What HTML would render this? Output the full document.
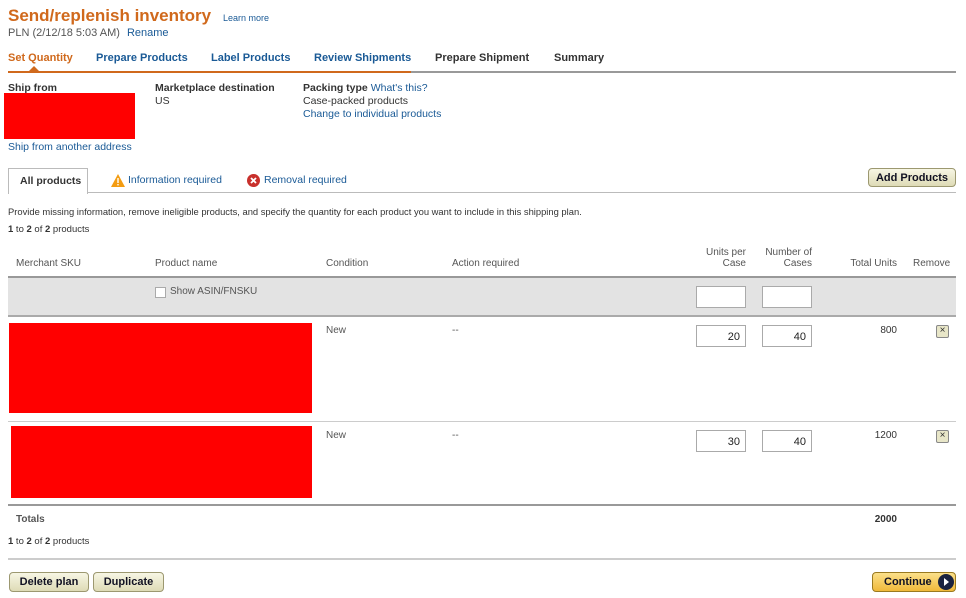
<!DOCTYPE html><html><head><style>
body{margin:0;width:966px;height:598px;position:relative;font-family:"Liberation Sans",Arial,sans-serif;background:#fff;color:#333;overflow:hidden}
.a{position:absolute;white-space:nowrap}
.s{font-size:10.5px}
.l{color:#1a5a96}
.b{font-weight:bold}
.tab{font-size:11px;font-weight:bold;color:#1a5a96}
.inp{position:absolute;width:50px;height:20px;border:1px solid #aaa;background:#fff;font-size:11px;text-align:right;box-sizing:border-box;padding:5px 5px 0 0;color:#222}
.btn{position:absolute;height:19px;border:1px solid #9c9870;border-radius:4px;background:linear-gradient(#f7f6e4,#dedbb6);font-size:11px;font-weight:bold;color:#112;text-align:center;line-height:18px;box-sizing:border-box}
.hr{position:absolute;left:8px;width:948px;height:2px;background:#bbb}
.xi{position:absolute;width:11px;height:11px;border:1px solid #888;background:#e8e6c8;font-size:10px;line-height:10px;text-align:center;border-radius:2px;color:#333}
</style></head><body>
<div class="a b" style="left:8px;top:6px;font-size:17px;color:#d0691c">Send/replenish inventory</div>
<div class="a l" style="left:223px;top:13px;font-size:9px">Learn more</div>
<div class="a" style="left:8px;top:27px;font-size:11px;color:#555">PLN (2/12/18 5:03 AM) <span class="l" style="margin-left:4px">Rename</span></div>
<div class="a tab" style="left:8px;top:52px;color:#d0691c">Set Quantity</div>
<div class="a tab" style="left:96px;top:52px">Prepare Products</div>
<div class="a tab" style="left:211px;top:52px">Label Products</div>
<div class="a tab" style="left:314px;top:52px">Review Shipments</div>
<div class="a tab" style="left:435px;top:52px;color:#333">Prepare Shipment</div>
<div class="a tab" style="left:554px;top:52px;color:#333">Summary</div>
<div class="a" style="left:8px;top:71px;width:403px;height:2px;background:#d0691c"></div>
<div class="a" style="left:411px;top:71px;width:545px;height:2px;background:#999"></div>
<div class="a" style="left:29px;top:66px;width:0;height:0;border-left:5px solid transparent;border-right:5px solid transparent;border-bottom:5px solid #d0691c"></div>
<div class="a s b" style="left:8px;top:82px">Ship from</div>
<div class="a" style="left:4px;top:93px;width:131px;height:46px;background:#f00"></div>
<div class="a s l" style="left:8px;top:141px">Ship from another address</div>
<div class="a s" style="left:155px;top:82px;line-height:13px"><b>Marketplace destination</b><br>US</div>
<div class="a s" style="left:303px;top:82px;line-height:13px"><b>Packing type</b> <span class="l">What's this?</span><br>Case-packed products<br><span class="l">Change to individual products</span></div>
<div class="a" style="left:8px;top:168px;width:80px;height:26px;border:1px solid #bbb;border-bottom:none;background:#fff;box-sizing:border-box;z-index:2"></div>
<div class="a s b" style="left:20px;top:175px;z-index:3">All products</div>
<div class="a" style="left:8px;top:192px;width:948px;height:1px;background:#bbb"></div>
<svg class="a" style="left:111px;top:174px" width="14" height="13"><path d="M7 0L14 13H0Z" fill="#f39c12"/><rect x="6.3" y="4" width="1.4" height="5" fill="#fff"/><rect x="6.3" y="10" width="1.4" height="1.4" fill="#fff"/></svg>
<div class="a s l" style="left:128px;top:174px">Information required</div>
<svg class="a" style="left:247px;top:174px" width="13" height="13"><circle cx="6.5" cy="6.5" r="6.5" fill="#c8302c"/><path d="M4 4L9 9M9 4L4 9" stroke="#fff" stroke-width="1.8"/></svg>
<div class="a s l" style="left:264px;top:174px">Removal required</div>
<div class="btn" style="left:868px;top:168px;width:88px;font-size:11px">Add Products</div>
<div class="a" style="left:8px;top:206px;font-size:9.4px">Provide missing information, remove ineligible products, and specify the quantity for each product you want to include in this shipping plan.</div>
<div class="a" style="left:8px;top:224px;font-size:9.5px"><b>1</b> to <b>2</b> of <b>2</b> products</div>
<div class="a" style="left:16px;top:258px;font-size:10px;color:#555">Merchant SKU</div>
<div class="a" style="left:155px;top:258px;font-size:10px;color:#555">Product name</div>
<div class="a" style="left:326px;top:258px;font-size:10px;color:#555">Condition</div>
<div class="a" style="left:452px;top:258px;font-size:10px;color:#555">Action required</div>
<div class="a" style="left:686px;width:60px;top:247px;font-size:10px;color:#555;text-align:right;line-height:11px;white-space:normal">Units per<br>Case</div>
<div class="a" style="left:752px;width:60px;top:247px;font-size:10px;color:#555;text-align:right;line-height:11px;white-space:normal">Number of<br>Cases</div>
<div class="a" style="left:830px;width:67px;top:258px;font-size:10px;color:#555;text-align:right">Total Units</div>
<div class="a" style="left:913px;top:258px;font-size:10px;color:#555">Remove</div>
<div class="a" style="left:8px;top:276px;width:948px;height:41px;background:#e3e3e3;border-top:2px solid #999;border-bottom:2px solid #aaa;box-sizing:border-box"></div>
<div class="a" style="left:155px;top:287px;width:9px;height:9px;border:1px solid #aaa;background:#fff"></div>
<div class="a" style="left:170px;top:286px;font-size:10px;color:#555">Show ASIN/FNSKU</div>
<div class="inp" style="left:696px;top:286px;height:22px"></div>
<div class="inp" style="left:762px;top:286px;height:22px"></div>
<div class="a" style="left:9px;top:323px;width:303px;height:90px;background:#f00"></div>
<div class="a" style="left:326px;top:325px;font-size:10px;color:#555">New</div>
<div class="a" style="left:452px;top:325px;font-size:10px;color:#555">--</div>
<div class="inp" style="left:696px;top:325px;height:22px">20</div>
<div class="inp" style="left:762px;top:325px;height:22px">40</div>
<div class="a" style="left:830px;width:67px;top:325px;font-size:10px;text-align:right">800</div>
<div class="xi" style="left:936px;top:325px">×</div>
<div class="a" style="left:8px;top:421px;width:948px;height:1px;background:#ccc"></div>
<div class="a" style="left:11px;top:426px;width:301px;height:72px;background:#f00"></div>
<div class="a" style="left:326px;top:430px;font-size:10px;color:#555">New</div>
<div class="a" style="left:452px;top:430px;font-size:10px;color:#555">--</div>
<div class="inp" style="left:696px;top:430px;height:22px">30</div>
<div class="inp" style="left:762px;top:430px;height:22px">40</div>
<div class="a" style="left:830px;width:67px;top:430px;font-size:10px;text-align:right">1200</div>
<div class="xi" style="left:936px;top:430px">×</div>
<div class="hr" style="top:504px;background:#999"></div>
<div class="a b" style="left:16px;top:514px;font-size:10px;color:#555">Totals</div>
<div class="a b" style="left:830px;width:67px;top:514px;font-size:10px;text-align:right">2000</div>
<div class="a" style="left:8px;top:536px;font-size:9.5px"><b>1</b> to <b>2</b> of <b>2</b> products</div>
<div class="hr" style="top:558px;background:#ccc"></div>
<div class="btn" style="left:9px;top:572px;width:80px;height:20px;line-height:19px">Delete plan</div>
<div class="btn" style="left:93px;top:572px;width:71px;height:20px;line-height:19px">Duplicate</div>
<div class="btn" style="left:872px;top:572px;width:84px;height:20px;line-height:19px;background:linear-gradient(#fbe08a,#f0b93a);border-color:#9a7a20;text-align:left;padding-left:11px">Continue</div>
<svg class="a" style="left:937px;top:573px" width="18" height="18"><circle cx="9" cy="9" r="8" fill="#1a2340"/><path d="M7 5L12 9L7 13Z" fill="#fff"/></svg>
</body></html>
